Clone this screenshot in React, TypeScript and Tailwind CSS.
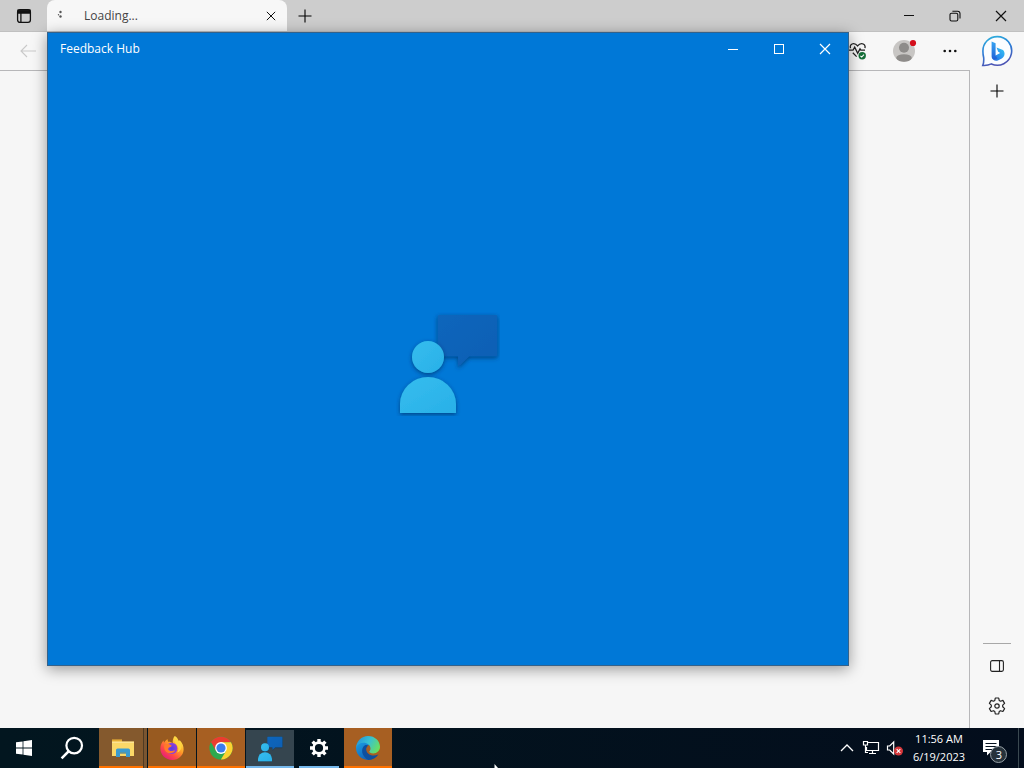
import React from 'react';

type IconProps = { className?: string };

function TabActionsIcon() {
  return (
    <svg width="16" height="16" viewBox="0 0 16 16" fill="none" stroke="#111" strokeWidth="1.3" aria-hidden>
      <rect x="1.6" y="1.6" width="12.8" height="12.8" rx="2.4" />
      <path d="M2 2.2h12v2.8H2z" fill="#111" />
      <path d="M4.9 5v9" />
    </svg>
  );
}

function CrossIcon({ className }: IconProps) {
  return (
    <svg className={className} viewBox="0 0 12 12" fill="none" stroke="currentColor" strokeWidth="1.2" aria-hidden>
      <path d="M1 1l10 10M11 1L1 11" />
    </svg>
  );
}

function PlusIcon({ className }: IconProps) {
  return (
    <svg className={className} viewBox="0 0 14 14" fill="none" stroke="currentColor" strokeWidth="1.1" aria-hidden>
      <path d="M7 .5v13M.5 7h13" />
    </svg>
  );
}

function RestoreIcon() {
  return (
    <svg width="12" height="12" viewBox="0 0 12 12" fill="none" stroke="#111" strokeWidth="1.1" aria-hidden>
      <rect x="1" y="3.2" width="7.8" height="7.8" rx="1.6" />
      <path d="M3.4 1.2h5.2A2.4 2.4 0 0 1 11 3.6v5" />
    </svg>
  );
}

function HealthIcon() {
  return (
    <svg width="18" height="18" viewBox="0 0 18 18" fill="none" stroke="#222" strokeWidth="1.3" aria-hidden>
      <path d="M1.4 6.2C.6 3.4 2.4 1.6 4.6 1.6c1.9 0 3 1 4 2.3 1-1.3 2.1-2.3 4-2.3 2.5 0 4 2 3.4 4.6" />
      <path d="M0 8.2h4l1.7-3.1 3 6.2 2.3-4.4.8 1.3H16M3.8 10.8l3.8 3.8" />
      <circle cx="13.2" cy="13.8" r="3.7" fill="#16703a" stroke="none" />
      <path d="M11.4 13.9l1.3 1.2 2.300-2.400" stroke="#fff" strokeWidth="1.1" />
    </svg>
  );
}

function ProfileIcon() {
  return (
    <svg width="24" height="24" viewBox="0 0 24 24" aria-hidden>
      <defs>
        <clipPath id="avatar">
          <circle cx="11" cy="13" r="11" />
        </clipPath>
      </defs>
      <g clipPath="url(#avatar)">
        <path d="M0 2h22v22H0z" fill="#c8c6c4" />
        <circle cx="11" cy="9.8" r="5" fill="#8e8c8a" />
        <ellipse cx="11" cy="20" rx="7.8" ry="3.8" fill="#8e8c8a" />
      </g>
      <circle cx="20" cy="5" r="3.1" fill="#d40f1c" />
    </svg>
  );
}

function BingIcon() {
  return (
    <svg width="32" height="32" viewBox="0 0 32 32" aria-hidden>
      <defs>
        <linearGradient id="bingRing" x1="0" y1="0" x2=".3" y2="1">
          <stop offset="0" stopColor="#2fb4dc" />
          <stop offset=".5" stopColor="#2a7fd8" />
          <stop offset="1" stopColor="#4c55b4" />
        </linearGradient>
        <linearGradient id="bingStem" x1="0" y1="0" x2="0" y2="1">
          <stop offset="0" stopColor="#35a4f2" />
          <stop offset="1" stopColor="#2261d6" />
        </linearGradient>
        <linearGradient id="bingMark" x1="1" y1="0" x2="0" y2="1">
          <stop offset="0" stopColor="#34c6f0" />
          <stop offset=".5" stopColor="#2b98f0" />
          <stop offset="1" stopColor="#2365dc" />
        </linearGradient>
      </defs>
      <path
        d="M16.2 1.600a14.300 14.300 0 1 1-5.800 27.300c-2.500 1.200-5.200 1.700-8.600 1.500 1-2.300 1.100-4.400.9-7.600-.5-2-.8-4.500-.8-6.900A14.300 14.300 0 0 1 16.200 1.600z"
        fill="#fbfdff"
        stroke="url(#bingRing)"
        strokeWidth="1.600"
      />
      <path d="M15.500 12.400l6.500 2.700c2.600 2.600 1.800 6.600-1.200 8.400l-4 1.900c-2.400.8-5.600-.3-6-2.900l8.400-4.600-2-1.100z" fill="url(#bingMark)" />
      <path d="M10.600 6.600l4 1.600v12.400l1.800 2.600c-2 2-5.800 1-5.800-1.800z" fill="url(#bingStem)" />
    </svg>
  );
}

function FeedbackArt({ className, id }: IconProps & { id: string }) {
  return (
    <svg className={className} viewBox="0 0 104 104" aria-hidden>
      <defs>
        <linearGradient id={`${id}-person`} x1="0" y1="0" x2="1" y2="1">
          <stop offset="0" stopColor="#35bdee" />
          <stop offset="1" stopColor="#29b0e8" />
        </linearGradient>
        <linearGradient id={`${id}-bubble`} x1="0" y1="0" x2="1" y2="1">
          <stop offset="0" stopColor="#0b66bc" />
          <stop offset="1" stopColor="#0a5fb4" />
        </linearGradient>
        <filter id={`${id}-shadow`} x="-20%" y="-20%" width="140%" height="150%">
          <feDropShadow dx="0" dy="1.500" stdDeviation="2" floodColor="#002f63" floodOpacity=".7" />
        </filter>
      </defs>
      <path
        d="M43 3h57a1.500 1.500 0 0 1 1.500 1.500V43a1.500 1.500 0 0 1-1.500 1.500H73L62 55V44.500H43a1.500 1.500 0 0 1-1.500-1.500V4.500A1.500 1.500 0 0 1 43 3z"
        fill={`url(#${id}-bubble)`}
        filter={`url(#${id}-shadow)`}
      />
      <g fill={`url(#${id}-person)`} filter={`url(#${id}-shadow)`}>
        <circle cx="32" cy="45" r="16" />
        <path d="M4 101V92a28 27 0 0 1 56 0v9z" />
      </g>
    </svg>
  );
}

function GearIcon({ className, light }: IconProps & { light?: boolean }) {
  if (light) {
    return (
      <svg className={className} viewBox="0 0 20 20" fill="none" stroke="#fff" aria-hidden>
        <circle cx="10" cy="10" r="5.400" strokeWidth="2.600" />
        <path
          d="M10 1v3.400M10 15.600V19M1 10h3.400M15.600 10H19M3.600 3.600L6 6M14 14l2.400 2.400M3.600 16.400L6 14M14 6l2.400-2.400"
          strokeWidth="3.400"
        />
      </svg>
    );
  }
  return (
    <svg className={className} viewBox="0 0 18 18" fill="none" stroke="#222" strokeWidth="1.2" strokeLinejoin="round" aria-hidden>
      <path d="M7.3 1h3.4l.5 2.4 1.3.8 2.4-.8 1.7 3-1.9 1.7v1.7l1.9 1.8-1.7 2.9-2.4-.8-1.3.8-.5 2.5H7.3l-.5-2.5-1.3-.8-2.4.8-1.7-2.9 1.9-1.8V8.1L1.4 6.4l1.7-3 2.4.8 1.3-.8z" />
      <circle cx="9" cy="9" r="2.2" />
    </svg>
  );
}

function WindowsIcon() {
  return (
    <svg width="16" height="16" viewBox="0 0 16 16" fill="#fff" aria-hidden>
      <path d="M0 2.3l6.6-.9v6.2H0zM7.4 1.3L16 0v7.6H7.4zM0 8.4h6.6v6.2L0 13.7zM7.4 8.4H16V16l-8.600-1.200z" />
    </svg>
  );
}

function SearchIcon() {
  return (
    <svg width="24" height="24" viewBox="0 0 24 24" fill="none" stroke="#fff" strokeWidth="2.200" aria-hidden>
      <circle cx="14.200" cy="9.600" r="7.800" />
      <path d="M8.800 15.200L1.600 22.400" strokeWidth="2.600" />
    </svg>
  );
}

function ExplorerIcon() {
  return (
    <svg width="24" height="20" viewBox="0 0 24 20" aria-hidden>
      <path d="M1 1.400h10v3H1z" fill="#e6ad34" />
      <path d="M1 3.600h22V18H1z" fill="#fbd868" />
      <path d="M1 3.600h22v1.400H1z" fill="#fee391" />
      <path d="M5 19v-7a1.600 1.600 0 0 1 1.600-1.600h10.800A1.600 1.600 0 0 1 19 12v7h-4v-4.400H9V19z" fill="#3b9bd0" />
      <path d="M9 15h6" stroke="#23709f" />
    </svg>
  );
}

function FirefoxIcon() {
  return (
    <svg width="26" height="26" viewBox="0 0 26 26" aria-hidden>
      <defs>
        <linearGradient id="foxBody" x1=".85" y1=".1" x2=".2" y2=".95">
          <stop offset="0" stopColor="#fff14f" />
          <stop offset=".4" stopColor="#ff9a26" />
          <stop offset=".7" stopColor="#ff4a45" />
          <stop offset="1" stopColor="#e41a7d" />
        </linearGradient>
        <radialGradient id="foxGlobe">
          <stop offset="0" stopColor="#5a3ce0" />
          <stop offset="1" stopColor="#9140d8" />
        </radialGradient>
      </defs>
      <path
        d="M15.8 1c2.300 1.400 3.200 3.200 3.700 4.800 1-.2 1.300-.6 1.300-.6 2.700 2.700 4 6 3.800 9.600C24.200 20.800 19.400 25 13.400 25 6.800 25 1.400 20.200 1.400 13.600c0-3 1-5.900 3.100-8l.5 2.200C6.300 5.600 8 4.600 8.600 4.300c0 1 .1 1.700.5 2.500 2.200-.1 3.500.5 4.700 1.500C13.400 5.600 14 3 15.800 1z"
        fill="url(#foxBody)"
      />
      <circle cx="12.600" cy="13.400" r="5.700" fill="url(#foxGlobe)" />
      <path d="M5.200 10.400c2-2 5.200-1.800 7.600.4-.5 1.500-2.300 1.400-3 1.900-1 .7-.8 2.200.5 2.900 2.700 1.400 3.800-.5 6-.1-1.300 2.700-6.100 3.900-9 1.400-1.600-1.400-2.400-3.900-2.100-6.500z" fill="#ff7a2a" />
      <path d="M15.800 1.400c-1.700 4 .2 6.200 2 8.400 1.900 2.500 2.200 5.200.4 7.800 3.600-1.400 5-4.800 4-8.400-1-3.100-4.800-4.100-6.400-7.800z" fill="#ffd43f" />
    </svg>
  );
}

function ChromeIcon() {
  return (
    <svg width="24" height="24" viewBox="0 0 24 24" aria-hidden>
      <circle cx="12" cy="12" r="11.600" fill="#2da94f" />
      <path d="M12 12L2 6.100A11.600 11.600 0 0 1 22 6.200H12z" fill="#ea3d2f" />
      <path d="M12 6.200h10a11.600 11.600 0 0 1-10.100 17.400L17 15z" fill="#fdd231" />
      <path d="M2 6.100l5 8.800L12 6.200 9 3z" fill="#ea3d2f" />
      <circle cx="12" cy="12" r="5.900" fill="#fff" />
      <circle cx="12" cy="12" r="4.600" fill="#3b7ded" />
    </svg>
  );
}

function EdgeIcon() {
  return (
    <svg width="26" height="26" viewBox="0 0 26 26" aria-hidden>
      <defs>
        <linearGradient id="edgeTop" x1="0" y1=".2" x2="1" y2=".6">
          <stop offset="0" stopColor="#2593d8" />
          <stop offset=".5" stopColor="#37c1d4" />
          <stop offset="1" stopColor="#6be05e" />
        </linearGradient>
        <linearGradient id="edgeLow" x1="0" y1="0" x2=".6" y2="1">
          <stop offset="0" stopColor="#1ba0e4" />
          <stop offset="1" stopColor="#1263b8" />
        </linearGradient>
      </defs>
      {/* left crescent */}
      <path d="M1 13c.6-4 4-6.400 8-6.400 3 0 5.400 1.400 6.600 3.600-3.200-.6-6 1.800-6 5.200 0 4.400 3.400 8 7.400 8.800A12 12 0 0 1 1 13z" fill="url(#edgeLow)" />
      {/* bottom sweep */}
      <path d="M10 10.200c-4.600 3-3.800 11.200 3.400 14.700 4.200 0 7.800-2 10-5.400-5.400 2.600-10.800.4-12-3.700-.6-2.200.2-4.200 2-5.200-1-.6-2.200-.8-3.400-.4z" fill="#0e4f9e" />
      {/* top wave */}
      <path
        d="M1 13C1.400 6 6.400 1 13 1c7 0 12 5 12 10.800 0 4-3 6.600-6.800 6.600-2.400 0-4-.8-3.900-1.600 0-.6 1.200-1.200 1.200-3.200 0-3.200-3.200-5.800-7-5.800C4.800 7.800 2 9.800 1 13z"
        fill="url(#edgeTop)"
      />
    </svg>
  );
}

function NetworkIcon() {
  return (
    <svg width="18" height="16" viewBox="0 0 18 16" fill="none" stroke="#fff" strokeWidth="1.200" aria-hidden>
      <path d="M6 2.500h10.500v8H4.500V7M10.500 10.500v3M7 13.500h7" />
      <path d="M1.500 1.500h4v3.500h-4zM3.500 5v7.500H6" />
    </svg>
  );
}

function VolumeIcon() {
  return (
    <svg width="18" height="16" viewBox="0 0 18 16" fill="none" aria-hidden>
      <path d="M1.500 6h2.200l4-4v12l-4-4H1.500z" stroke="#fff" strokeWidth="1.200" />
      <circle cx="12.500" cy="11" r="4.500" fill="#d5373b" />
      <path d="M10.700 9.200l3.600 3.600M14.300 9.200l-3.600 3.600" stroke="#fff" strokeWidth="1.100" />
    </svg>
  );
}

function ActionCenterIcon() {
  return (
    <svg width="26" height="26" viewBox="0 0 26 26" aria-hidden>
      <path d="M1 2h16v12H8.600L5 17.600V14H1z" fill="#fff" />
      <path d="M3.500 5.500h11M3.500 8.500h11M3.500 11.500h7" stroke="#06121f" />
      <circle cx="16.500" cy="16.500" r="8" fill="#26323b" stroke="#97a0a6" />
    </svg>
  );
}

interface TaskItem {
  name: string;
  icon: React.ReactNode;
  tone: string;
  line?: string;
}

const tasks: TaskItem[] = [
  { name: 'Start', icon: <WindowsIcon />, tone: 'pr-0.5' },
  { name: 'Search', icon: <SearchIcon />, tone: 'pr-1' },
  { name: 'File Explorer', icon: <ExplorerIcon />, tone: 'bg-[#84592d]', line: 'w-full bg-[#ff7200]' },
  { name: 'Firefox', icon: <FirefoxIcon />, tone: 'bg-[#985a20]', line: 'w-full bg-[#ff7200]' },
  { name: 'Chrome', icon: <ChromeIcon />, tone: 'bg-[#a75f22]', line: 'w-full bg-[#ff7200]' },
  { name: 'Feedback Hub', icon: <FeedbackArt id="task" className="size-[26px]" />, tone: 'my-0.5 mb-0 bg-[#35454f]', line: 'w-full bg-[#76b9ed]' },
  { name: 'Settings', icon: <GearIcon light className="size-5" />, tone: '', line: 'w-10 bg-[#76b9ed]' },
  { name: 'Edge', icon: <EdgeIcon />, tone: 'bg-[#a75f22]', line: 'w-full bg-[#ff7200]' },
];

function TabStrip() {
  return (
    <div className="flex h-8 shrink-0 border-b border-[#c0c0c0] bg-[#cdcdcd]">
      <button aria-label="Tab actions" className="flex w-[47px] items-center justify-center pl-px">
        <TabActionsIcon />
      </button>
      <div className="flex w-60 items-center rounded-t-lg bg-[#f7f7f7] pl-2 pr-2.5">
        <svg width="10" height="12" viewBox="0 0 10 12" fill="#555" aria-hidden>
          <circle cx="5.500" cy="2" r="1.200" />
          <circle cx="3.500" cy="4.800" r=".7" />
          <circle cx="5.500" cy="6.500" r="1.200" />
        </svg>
        <span className="ml-[19px] flex-1 text-xs text-[#454545]">Loading...</span>
        <button aria-label="Close tab" className="flex size-3 items-center justify-center text-[#111]">
          <CrossIcon className="size-2.5" />
        </button>
      </div>
      <button aria-label="New tab" className="flex w-9 items-center justify-center">
        <PlusIcon className="size-3.5" />
      </button>
      <div className="ml-auto flex">
        <button aria-label="Minimize" className="flex w-[46px] items-center justify-center">
          <span className="h-px w-2.5 bg-[#111]" />
        </button>
        <button aria-label="Restore" className="flex w-[46px] items-center justify-center">
          <RestoreIcon />
        </button>
        <button aria-label="Close" className="flex w-[46px] items-center justify-center text-[#111]">
          <CrossIcon className="size-3" />
        </button>
      </div>
    </div>
  );
}

function Browser() {
  return (
    <div className="flex min-h-0 flex-1 flex-col bg-[#f7f7f7]">
      <TabStrip />
      <div className="flex min-h-0 flex-1">
        <div className="flex flex-1 flex-col">
          <div className="flex h-[38px] items-center justify-between pl-5 pr-[11px]">
            <button aria-label="Back" disabled>
              <svg width="16" height="14" viewBox="0 0 16 14" fill="none" stroke="#c9c9c9" strokeWidth="1.100" aria-hidden>
                <path d="M16 7H1M7 1L1 7l6 6" />
              </svg>
            </button>
            <div className="flex items-center">
              <button aria-label="Browser essentials">
                <HealthIcon />
              </button>
              <button aria-label="Profile" className="ml-[26px] pb-0.5">
                <ProfileIcon />
              </button>
              <button aria-label="Settings and more" className="ml-[26px] mr-0.5">
                <svg width="14" height="4" viewBox="0 0 14 4" fill="#111" aria-hidden>
                  <circle cx="1.700" cy="2" r="1.300" />
                  <circle cx="7" cy="2" r="1.300" />
                  <circle cx="12.300" cy="2" r="1.300" />
                </svg>
              </button>
            </div>
          </div>
          <div className="flex-1 border-r border-t border-[#b7b7b9] bg-[#f6f6f6]" />
        </div>
        <aside className="flex w-[54px] flex-col items-center pt-[3px]">
          <button aria-label="Bing">
            <BingIcon />
          </button>
          <button aria-label="Add to sidebar" className="mt-[17px]">
            <PlusIcon className="size-3.5" />
          </button>
          <div className="mt-auto h-px w-7 bg-[#a8a8a8]" />
          <button aria-label="Hide sidebar" className="mt-4">
            <svg width="14" height="12" viewBox="0 0 14 12" fill="none" stroke="#222" strokeWidth="1.100" aria-hidden>
              <rect x=".6" y=".6" width="12.800" height="10.800" rx="1.600" />
              <path d="M9.500 1v10" />
            </svg>
          </button>
          <button aria-label="Sidebar settings" className="mb-[13px] mt-[25px]">
            <GearIcon className="size-[18px]" />
          </button>
        </aside>
      </div>
    </div>
  );
}

function FeedbackHubWindow() {
  return (
    <section
      aria-label="Feedback Hub"
      className="absolute bottom-[102px] left-[47px] right-[175px] top-8 flex flex-col border border-[#35628a] bg-[#0078d7] text-white shadow-[0_3px_14px_rgba(0,0,0,0.4)]"
    >
      <header className="flex h-8 items-center pl-3">
        <h1 className="flex-1 text-xs">Feedback Hub</h1>
        <button aria-label="Minimize" className="flex h-full w-[46px] items-center justify-center">
          <span className="h-px w-2.5 bg-white" />
        </button>
        <button aria-label="Maximize" className="flex h-full w-[46px] items-center justify-center">
          <span className="size-2.5 border border-white" />
        </button>
        <button aria-label="Close" className="flex h-full w-[46px] items-center justify-center">
          <CrossIcon className="size-3" />
        </button>
      </header>
      <div className="flex flex-1 items-center justify-center">
        <FeedbackArt id="splash" className="mb-0.5 size-[104px]" />
      </div>
    </section>
  );
}

function Taskbar() {
  return (
    <footer className="flex h-10 shrink-0 bg-linear-to-r from-[#02161f] to-[#030d1c] text-white">
      <nav className="flex gap-px pl-px">
        {tasks.map((t) => (
          <button key={t.name} aria-label={t.name} className={`relative flex w-12 items-center justify-center ${t.tone}`}>
            {t.icon}
            {t.line && <span className={`absolute bottom-0 h-0.5 ${t.line}`} />}
            {t.name === 'File Explorer' && <span className="absolute inset-y-0 right-0 w-1 border-l border-[#4f3a22] bg-[#7a5530]" />}
          </button>
        ))}
      </nav>
      <div className="ml-auto flex items-center">
        <button aria-label="Show hidden icons">
          <svg width="14" height="8" viewBox="0 0 14 8" fill="none" stroke="#fff" strokeWidth="1.300" aria-hidden>
            <path d="M1 7l6-6 6 6" />
          </svg>
        </button>
        <button aria-label="Network" className="ml-2">
          <NetworkIcon />
        </button>
        <button aria-label="Volume muted" className="ml-1.5">
          <VolumeIcon />
        </button>
        <button className="w-[70px] text-center text-[11px] leading-[18px]">
          <span className="block">11:56 AM</span>
          <span className="block">6/19/2023</span>
        </button>
        <button aria-label="Notifications" className="relative ml-2 mt-1.5">
          <ActionCenterIcon />
          <span className="absolute bottom-px right-px flex size-4 items-center justify-center text-[11px]">3</span>
        </button>
        <div className="ml-2.5 h-full w-1.5 border-l border-[#3a4850]" />
      </div>
    </footer>
  );
}

export default function App() {
  return (
    <div className="relative flex h-screen flex-col overflow-hidden font-['Open_Sans',sans-serif]">
      <Browser />
      <FeedbackHubWindow />
      <Taskbar />
      {/* mouse pointer, mostly below the screen edge */}
      <svg className="absolute bottom-0 left-[494px]" width="4" height="4" viewBox="0 0 4 4" aria-hidden>
        <path d="M.5 0L4 4H.5z" fill="#fff" />
      </svg>
    </div>
  );
}
